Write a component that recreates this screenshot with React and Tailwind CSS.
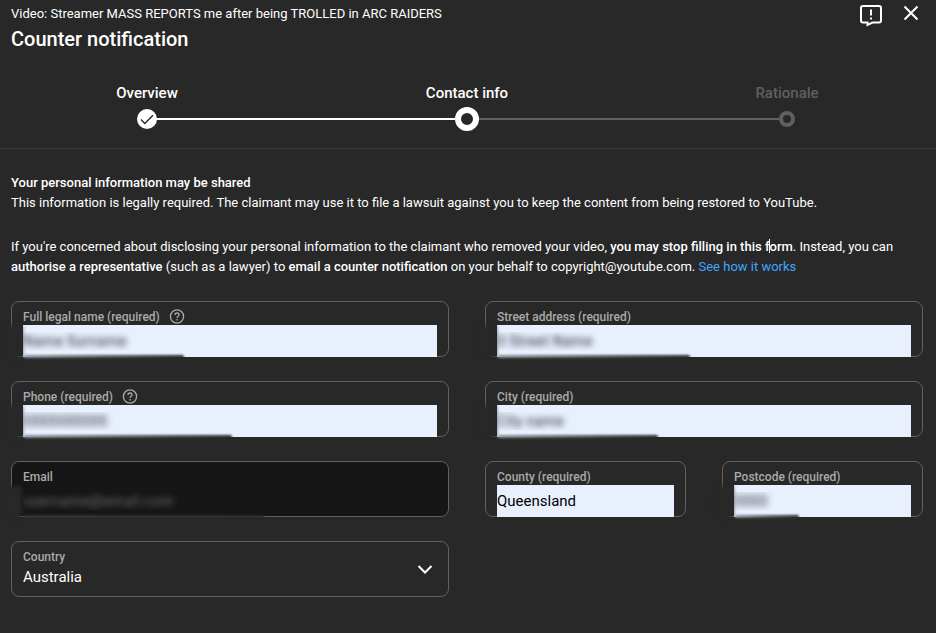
import React, { useState } from 'react';
import clsx from 'clsx';

const fieldBox = 'relative flex h-14 flex-col rounded-lg border border-[#606060] px-[11px] pt-[7px]';

const HelpIcon = () => (
    <svg width="16" height="16" viewBox="0 0 16 16" fill="none" stroke="#aaa" strokeWidth="1.3">
        <circle cx="8" cy="7.500" r="6.6" />
        <path d="M6 6C6 4.700 6.900 4 8 4s2 .8 2 1.8c0 1.500-1.900 1.600-1.900 3.100" />
        <path d="M8.100 10.100v1.400" />
    </svg>
);

// soft smear over the left border and bottom edge of a redacted field
const Smudge = ({ width = 'w-40', color = 'from-[#8a9099]' }) => (
    <>
        <span className="pointer-events-none absolute top-6 -bottom-0.5 -left-2 w-[18px] bg-[#282828] blur-[2px]" />
        <span
            className={clsx(
                'pointer-events-none absolute -bottom-0.5 left-3 h-[3px] rounded-full bg-linear-to-r to-[#282828] blur-[1px]',
                width,
                color
            )}
        />
    </>
);

const TextField = ({ id, label, defaultValue, help, redacted, smear }) => {
    const [value, setValue] = useState(defaultValue);

    return (
        <div className={fieldBox}>
            <div className="flex h-4 items-center gap-[9px]">
                <label htmlFor={id} className="text-xs font-medium text-[#aaa]">{label}</label>
                {help && (
                    <button type="button" aria-label={`Help: ${label}`}>
                        <HelpIcon />
                    </button>
                )}
            </div>
            <input
                id={id}
                type="text"
                value={value}
                onChange={(e) => setValue(e.target.value)}
                className={clsx(
                    'relative h-8 w-full shrink-0 bg-[#e8f0fe] text-[15px] outline-none',
                    redacted ? 'text-transparent [text-shadow:0_0_6px_#333]' : 'text-black'
                )}
            />
            {redacted && <Smudge width={smear} />}
        </div>
    );
};

const Stepper = () => (
    <div className="mt-8 pb-[17px]">
        <ol className="flex justify-between px-[88px] text-center text-[15px] leading-5 font-medium">
            <li className="w-24">Overview</li>
            <li className="w-24" aria-current="step">Contact info</li>
            <li className="w-24 text-[#606060]">Rationale</li>
        </ol>
        <div className="mt-1 flex items-center px-32">
            <span className="flex w-4 justify-center">
                <svg className="shrink-0" width="20" height="20" viewBox="0 0 20 20" fill="none">
                    <circle cx="10" cy="10" r="10" fill="#fff" />
                    <path d="M4 10.6 7.8 14.4 16 6.2" stroke="#282828" strokeWidth="1.4" />
                </svg>
            </span>
            <span className="h-0.5 flex-1 bg-white" />
            <span className="size-6 rounded-full border-[6px] border-white" />
            <span className="h-0.5 flex-1 bg-[#606060]" />
            <span className="size-4 rounded-full border-4 border-[#606060]" />
        </div>
    </div>
);

const App = () => {
    const [country, setCountry] = useState('Australia');

    return (
        <div className="min-h-screen bg-[#282828] font-[Roboto,sans-serif] text-[13px] leading-5 text-white">
            <header className="border-b border-[#3e3e3e] pt-1 pr-[13px] pl-[11px]">
                <div className="flex items-start justify-between">
                    <div>
                        <p>Video: Streamer MASS REPORTS me after being TROLLED in ARC RAIDERS</p>
                        <h1 className="pt-[3px] text-xl leading-6 font-medium">Counter notification</h1>
                    </div>
                    <div className="flex gap-4">
                        <button type="button" aria-label="Send feedback">
                            <svg width="24" height="24" viewBox="0 0 24 24" fill="none" stroke="#fff" strokeWidth="2">
                                <path d="M4 2h16a2 2 0 0 1 2 2v12.500a2 2 0 0 1-2 2h-6.500L8.500 21v-2.500H4a2 2 0 0 1-2-2V4a2 2 0 0 1 2-2Z" />
                                <path d="M12 5.500v6M12 13.500v2" />
                            </svg>
                        </button>
                        <button type="button" aria-label="Close" className="h-5">
                            <svg width="24" height="20" viewBox="0 0 24 20" fill="none" stroke="#fff" strokeWidth="2">
                                <path d="m5.500 2.500 13 13M18.500 2.500l-13 13" />
                            </svg>
                        </button>
                    </div>
                </div>
                <Stepper />
            </header>

            <main className="pt-6 pr-[13px] pb-9 pl-[11px]">
                <h2 className="font-medium">Your personal information may be shared</h2>
                <p>
                    This information is legally required. The claimant may use it to file a lawsuit against you to keep
                    the content from being restored to YouTube.
                </p>
                <p className="mt-6">
                    If you're concerned about disclosing your personal information to the claimant who removed your
                    video,{' '}
                    <b className="font-medium">
                        you may stop filling in this f
                        <span className="relative">
                            <span className="absolute top-0 right-0 h-3.5 w-px bg-white" />
                        </span>
                        orm
                    </b>
                    . Instead, you can <b className="font-medium">authorise a representative</b> (such as a lawyer) to{' '}
                    <b className="font-medium">email a counter notification</b> on your behalf to
                    copyright@youtube.com.{' '}
                    <a href="#how" className="text-[#3ea6ff]">See how it works</a>
                </p>

                <form className="mt-6 grid grid-cols-2 gap-x-9 gap-y-6">
                    <TextField id="name" label="Full legal name (required)" defaultValue="Name Surname" help redacted />
                    <TextField
                        id="street"
                        label="Street address (required)"
                        defaultValue="0 Street Name"
                        redacted
                        smear="w-48"
                    />
                    <TextField id="phone" label="Phone (required)" defaultValue="0000000000" help redacted smear="w-52" />
                    <TextField id="city" label="City (required)" defaultValue="City name" redacted />

                    <div className={clsx(fieldBox, 'bg-[#161616]')}>
                        <label htmlFor="email" className="h-4 text-xs leading-4 font-medium text-[#aaa]">Email</label>
                        <input
                            id="email"
                            type="email"
                            readOnly
                            defaultValue="username@email.com"
                            className="h-8 w-full shrink-0 bg-transparent text-[15px] text-transparent outline-none [text-shadow:0_0_6px_#707070]"
                        />
                        <Smudge width="w-60" color="from-[#303030]" />
                    </div>

                    <div className="grid grid-cols-2 gap-9">
                        <TextField id="county" label="County (required)" defaultValue="Queensland" />
                        <TextField
                            id="postcode"
                            label="Postcode (required)"
                            defaultValue="0000"
                            redacted
                            smear="w-16"
                        />
                    </div>

                    <div className={fieldBox}>
                        <label htmlFor="country" className="h-4 text-xs leading-4 font-medium text-[#aaa]">Country</label>
                        <select
                            id="country"
                            value={country}
                            onChange={(e) => setCountry(e.target.value)}
                            className="h-6 w-full shrink-0 appearance-none bg-[#282828] text-[15px] outline-none"
                        >
                            <option>Australia</option>
                            <option>New Zealand</option>
                        </select>
                        <svg
                            className="pointer-events-none absolute top-4 right-[11px]"
                            width="24"
                            height="24"
                            viewBox="0 0 24 24"
                            fill="none"
                            stroke="#fff"
                            strokeWidth="2"
                        >
                            <path d="m5.500 8 6.500 6.500L18.500 8" />
                        </svg>
                    </div>
                </form>
            </main>
        </div>
    );
};

export default App;
